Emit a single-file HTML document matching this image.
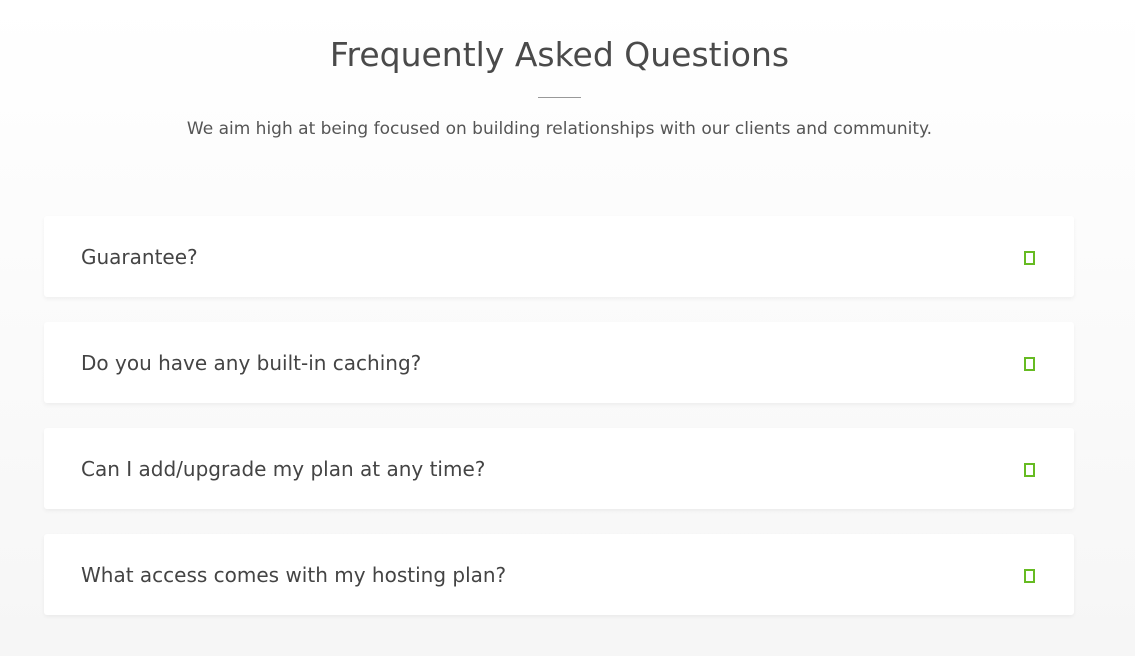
<!DOCTYPE html>
<html><head><style>
body{margin:0;width:1135px;height:656px;overflow:hidden;background:linear-gradient(#fff,#f6f6f6);font-family:"Liberation Sans","DejaVu Sans",sans-serif;color:#444;position:relative}
h1{position:absolute;top:35px;left:0;width:1119px;text-align:center;margin:0;font-weight:400;font-size:33px;color:#4a4a4a;font-family:"DejaVu Sans",sans-serif;letter-spacing:0}
.hr{position:absolute;left:538px;top:97px;width:43px;height:1px;background:#999}
p{position:absolute;top:119px;left:0;width:1119px;text-align:center;margin:0;font-size:17px;color:#555;font-family:"DejaVu Sans",sans-serif;}
.card{position:absolute;left:44px;width:1030px;height:81px;background:#fff;border-radius:3px;box-shadow:0 2px 4px rgba(0,0,0,.05)}
.card span{position:absolute;left:37px;top:29px;font-size:20px;font-family:"DejaVu Sans",sans-serif;color:#444}
.card i{position:absolute;left:980px;top:35px;width:11px;height:14px;box-sizing:border-box;border:2px solid #66bb22}
</style></head><body>
<h1>Frequently Asked Questions</h1>
<div class="hr"></div>
<p>We aim high at being focused on building relationships with our clients and community.</p>
<div class="card" style="top:216px"><span>Guarantee?</span><i></i></div>
<div class="card" style="top:322px"><span>Do you have any built-in caching?</span><i></i></div>
<div class="card" style="top:428px"><span>Can I add/upgrade my plan at any time?</span><i></i></div>
<div class="card" style="top:534px"><span>What access comes with my hosting plan?</span><i></i></div>
</body></html>
